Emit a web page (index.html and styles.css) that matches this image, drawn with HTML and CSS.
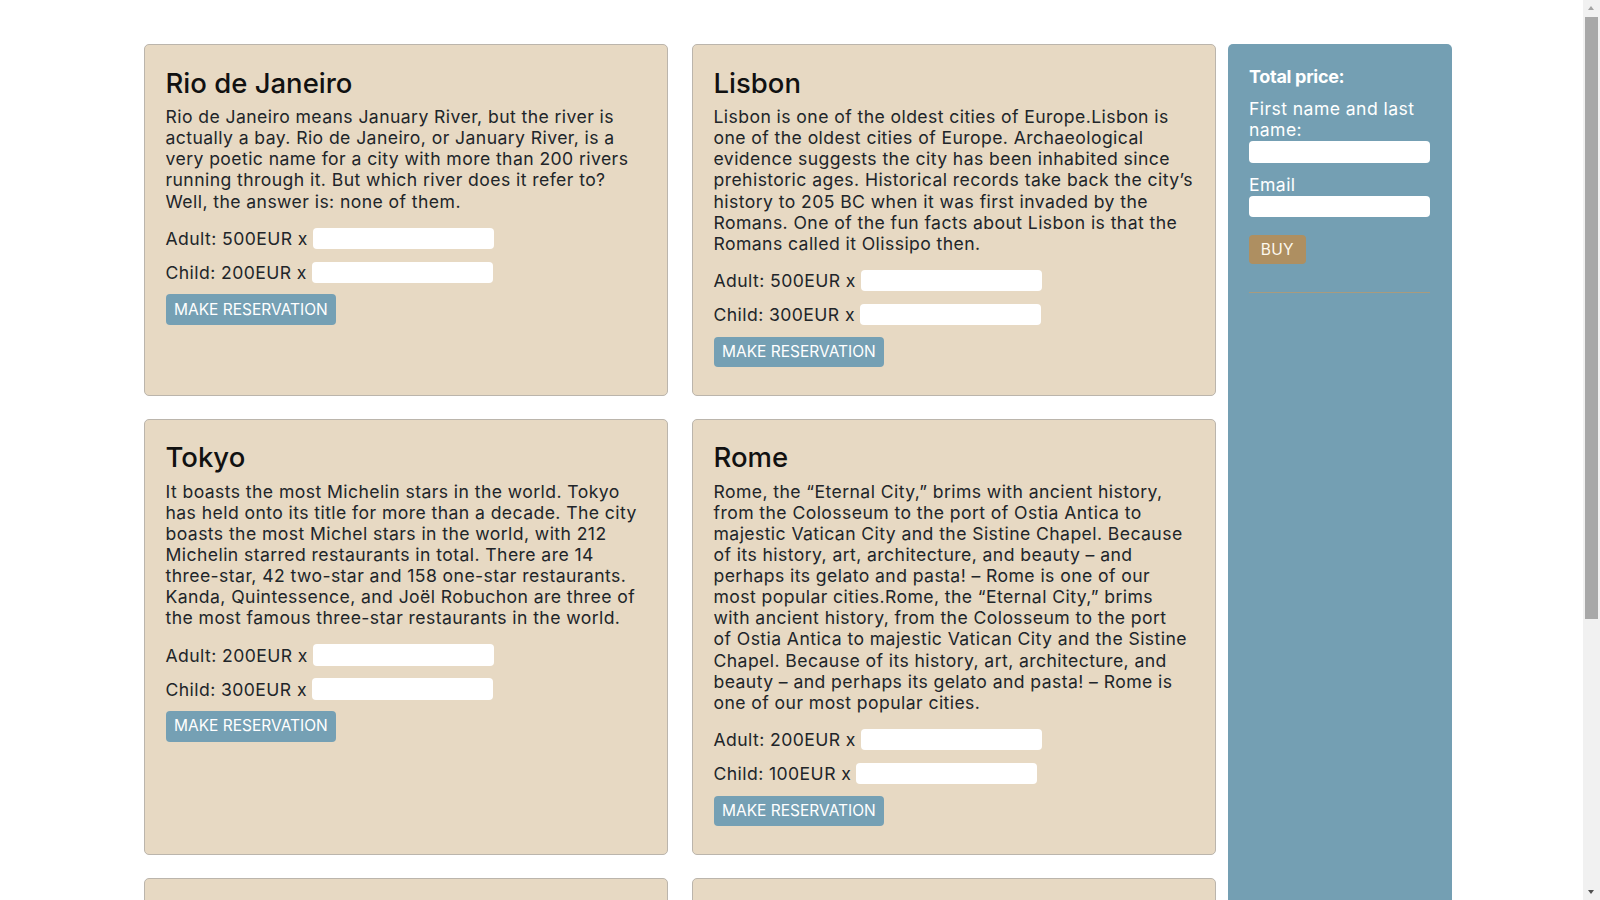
FILE: index.html
```html
<!DOCTYPE html>
<html lang="en">
<head>
<meta charset="utf-8">
<title>Travel reservations</title>
<link rel="stylesheet" href="styles.css">
</head>
<body>
<div class="wrapper">
  <main class="cards">
    <section class="card">
      <h3 class="card-title">Rio de Janeiro</h3>
      <p class="card-text">Rio de Janeiro means January River, but the river is actually a bay. Rio de Janeiro, or January River, is a very poetic name for a city with more than 200 rivers running through it. But which river does it refer to? Well, the answer is: none of them.</p>
      <div class="row"><label>Adult: 500EUR x</label><input type="text" class="field"></div>
      <div class="row"><label>Child: 200EUR x</label><input type="text" class="field"></div>
      <button class="btn-reserve">MAKE RESERVATION</button>
    </section>
    <section class="card">
      <h3 class="card-title">Lisbon</h3>
      <p class="card-text">Lisbon is one of the oldest cities of Europe.Lisbon is one of the oldest cities of Europe. Archaeological evidence suggests the city has been inhabited since prehistoric ages. Historical records take back the city’s history to 205 BC when it was first invaded by the Romans. One of the fun facts about Lisbon is that the Romans called it Olissipo then.</p>
      <div class="row"><label>Adult: 500EUR x</label><input type="text" class="field"></div>
      <div class="row"><label>Child: 300EUR x</label><input type="text" class="field"></div>
      <button class="btn-reserve">MAKE RESERVATION</button>
    </section>
    <section class="card">
      <h3 class="card-title">Tokyo</h3>
      <p class="card-text">It boasts the most Michelin stars in the world. Tokyo has held onto its title for more than a decade. The city boasts the most Michel stars in the world, with 212 Michelin starred restaurants in total. There are 14 three-star, 42 two-star and 158 one-star restaurants. Kanda, Quintessence, and Joël Robuchon are three of the most famous three-star restaurants in the world.</p>
      <div class="row"><label>Adult: 200EUR x</label><input type="text" class="field"></div>
      <div class="row"><label>Child: 300EUR x</label><input type="text" class="field"></div>
      <button class="btn-reserve">MAKE RESERVATION</button>
    </section>
    <section class="card">
      <h3 class="card-title">Rome</h3>
      <p class="card-text">Rome, the “Eternal City,” brims with ancient history, from the Colosseum to the port of Ostia Antica to majestic Vatican City and the Sistine Chapel. Because of its history, art, architecture, and beauty – and perhaps its gelato and pasta! – Rome is one of our most popular cities.Rome, the “Eternal City,” brims with ancient history, from the Colosseum to the port<br>of Ostia Antica to majestic Vatican City and the Sistine Chapel. Because of its history, art, architecture, and beauty – and perhaps its gelato and pasta! – Rome is one of our most popular cities.</p>
      <div class="row"><label>Adult: 200EUR x</label><input type="text" class="field"></div>
      <div class="row"><label>Child: 100EUR x</label><input type="text" class="field"></div>
      <button class="btn-reserve">MAKE RESERVATION</button>
    </section>
    <section class="card">
      <h3 class="card-title">Paris</h3>
      <p class="card-text">Paris, the City of Light, is famous for its cafés, museums and elegant boulevards. From the Eiffel Tower to the Louvre and Montmartre, every corner of the city tells a story of art, history and romance.</p>
      <div class="row"><label>Adult: 400EUR x</label><input type="text" class="field"></div>
      <div class="row"><label>Child: 200EUR x</label><input type="text" class="field"></div>
      <button class="btn-reserve">MAKE RESERVATION</button>
    </section>
    <section class="card">
      <h3 class="card-title">New York</h3>
      <p class="card-text">New York is the city that never sleeps. Walk through Central Park, see a Broadway show, and enjoy the view from the top of the Empire State Building before tasting food from every corner of the world.</p>
      <div class="row"><label>Adult: 600EUR x</label><input type="text" class="field"></div>
      <div class="row"><label>Child: 300EUR x</label><input type="text" class="field"></div>
      <button class="btn-reserve">MAKE RESERVATION</button>
    </section>
  </main>
  <aside class="sidebar">
    <h4 class="total">Total price:</h4>
    <label class="side-label">First name and last name:</label>
    <input type="text" class="field side-field">
    <label class="side-label email">Email</label>
    <input type="text" class="field side-field">
    <button class="btn-buy">BUY</button>
    <hr class="side-rule">
  </aside>
</div>
<div class="scrollbar" aria-hidden="true">
  <span class="sb-arrow sb-up"></span>
  <span class="sb-thumb"></span>
  <span class="sb-arrow sb-down"></span>
</div>
</body>
</html>
```
FILE: styles.css
```css
* { box-sizing: border-box; }
html, body { margin: 0; padding: 0; }
body {
  background: #ffffff;
  color: #212529;
  font-family: "Inter", "Noto Sans", sans-serif;
  font-size: 17.6px;
  letter-spacing: 0.42px;
  padding-right: 17px;
}
.wrapper {
  width: 1320px;
  margin: 0 auto;
  padding: 44px 0 44px 12px;
  display: flex;
  align-items: stretch;
}
.cards {
  width: 1072px;
  display: grid;
  grid-template-columns: 524px 524px;
  column-gap: 24px;
  row-gap: 23px;
  align-content: start;
}
.card {
  background: #e7d9c3;
  border: 1px solid #bbb5ac;
  border-radius: 5px;
  padding: 21.5px 21px 27.4px;
}
.card-title {
  margin: 0 0 6.6px;
  font-size: 27.5px;
  font-weight: 500;
  line-height: 33px;
  letter-spacing: 0;
  color: #111;
}
.card-text {
  margin: 0;
  line-height: 21.12px;
}
.row {
  display: flex;
  align-items: center;
  gap: 5px;
  margin-top: 12.6px;
  height: 21.4px;
}
.card-text + .row { margin-top: 16px; }
.row label { line-height: 21px; white-space: nowrap; }
.field {
  width: 181px;
  height: 21.4px;
  border: none;
  border-radius: 4px;
  background: #ffffff;
  padding: 1px 4px;
  font: inherit;
  outline: none;
}
.btn-reserve {
  display: block;
  margin-top: 11.4px;
  height: 30.4px;
  padding: 0 8.5px;
  border: none;
  border-radius: 4px;
  background: #75a0b4;
  color: #ffffff;
  font-family: "Inter", "Noto Sans", sans-serif;
  font-size: 15.5px;
  letter-spacing: 0;
  line-height: 30px;
  cursor: pointer;
}
.sidebar {
  width: 224.5px;
  margin-left: 12px;
  background: #749fb3;
  border-radius: 5px;
  padding: 22px 22px 22px 21.5px;
  color: #ffffff;
  display: flex;
  flex-direction: column;
  align-items: flex-start;
}
.total {
  margin: 0 0 10px;
  font-size: 18px;
  font-weight: 700;
  letter-spacing: -0.3px;
  line-height: 22px;
}
.side-label {
  display: block;
  line-height: 21.4px;
}
.side-label.email { margin-top: 11.2px; }
.side-field {
  width: 180.7px;
  height: 21.7px;
  margin-top: 0.3px;
}
.btn-buy {
  margin-top: 17.6px;
  height: 29.4px;
  width: 56.7px;
  padding: 0;
  border: none;
  border-radius: 4px;
  background: #ae8f61;
  color: #fdf8ee;
  font-family: "Inter", "Noto Sans", sans-serif;
  font-size: 15.5px;
  letter-spacing: 0.3px;
  line-height: 29px;
  cursor: pointer;
}
.side-rule {
  align-self: stretch;
  margin: 28px 0 0;
  border: none;
  border-top: 1px solid #b59a72;
  opacity: 0.8;
}
.scrollbar {
  position: fixed;
  top: 0;
  right: 0;
  width: 17px;
  height: 100vh;
  background: #f1f1f1;
}
.sb-thumb {
  position: absolute;
  left: 2px;
  right: 2px;
  top: 17px;
  height: 602px;
  background: #a8a8a8;
}
.sb-arrow {
  position: absolute;
  left: 5px;
  width: 0;
  height: 0;
  border-left: 3.5px solid transparent;
  border-right: 3.5px solid transparent;
}
.sb-up {
  top: 6px;
  border-bottom: 4px solid #a3a3a3;
}
.sb-down {
  bottom: 6px;
  border-top: 4px solid #505050;
}
```
